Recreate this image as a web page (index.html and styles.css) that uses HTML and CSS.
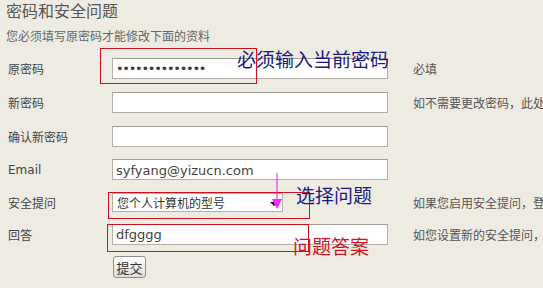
FILE: index.html
```html
<!DOCTYPE html>
<html lang="zh-CN">
<head>
    <meta charset="UTF-8">
    <title>密码和安全问题</title>
    <link rel="stylesheet" href="styles.css">
</head>
<body>
<div class="page">
    <h1 class="title">密码和安全问题</h1>
    <p class="intro">您必须填写原密码才能修改下面的资料</p>

    <form class="form">
        <div class="row r34">
            <label class="label">原密码</label>
            <input class="field pass" type="password" value="12345678901234">
            <span class="note">必填</span>
        </div>
        <div class="row r34">
            <label class="label">新密码</label>
            <input class="field pass" type="password">
            <span class="note">如不需要更改密码，此处</span>
        </div>
        <div class="row r34">
            <label class="label">确认新密码</label>
            <input class="field pass" type="password">
            <span class="note"></span>
        </div>
        <div class="row r33">
            <label class="label latin">Email</label>
            <input class="field latin" type="text" value="syfyang@yizucn.com">
            <span class="note"></span>
        </div>
        <div class="row r32">
            <label class="label">安全提问</label>
            <div class="select-col">
                <div class="select">
                    <span>您个人计算机的型号</span>
                    <span class="arrow"></span>
                </div>
            </div>
            <span class="note">如果您启用安全提问，登</span>
        </div>
        <div class="row r32">
            <label class="label">回答</label>
            <input class="field latin" type="text" value="dfgggg">
            <span class="note">如您设置新的安全提问，</span>
        </div>
        <div class="submit-row">
            <button class="button" type="button">提交</button>
        </div>
    </form>

    <!-- 截图上的标注 -->
    <div class="mark box1"></div>
    <div class="mark box2"></div>
    <div class="mark box3"></div>
    <span class="tip tip1">必须输入当前密码</span>
    <span class="tip tip2">选择问题</span>
    <span class="tip tip3">问题答案</span>
    <svg class="pointer" width="14" height="40" viewBox="0 0 14 40">
        <line x1="7" y1="0" x2="7" y2="28" stroke="#e01ee0" stroke-width="1"/>
        <polygon points="2,26 12,26 7,36" fill="#ff22ff"/>
    </svg>
</div>
</body>
</html>
```

FILE: styles.css
```css
html, body {
    margin: 0;
    padding: 0;
}
body {
    background-color: #eeebe3;
    font-family: "Noto Sans CJK SC", "DejaVu Sans", sans-serif;
    font-size: 12px;
    color: #4a4a4a;
    overflow: hidden;
}
.page {
    position: relative;
    width: 543px;
    height: 288px;
    overflow: hidden;
}
.title {
    margin: 0;
    padding: 0 0 0 6px;
    font-size: 16px;
    font-weight: normal;
    line-height: 20px;
    color: #555;
}
.intro {
    margin: 0;
    padding: 8px 0 0 6px;
    font-size: 12px;
    line-height: 16px;
    color: #666;
}
.form {
    margin-top: 7px;
}
.row {
    display: flex;
    align-items: center;
    white-space: nowrap;
}
.row > * {
    flex: none;
}
.r34 { height: 34px; }
.r33 { height: 33px; }
.r32 { height: 32px; }
.label {
    box-sizing: border-box;
    width: 112px;
    padding-left: 8px;
    color: #444;
}
.latin {
    font-family: "DejaVu Sans", sans-serif;
}
.field {
    box-sizing: border-box;
    width: 276px;
    height: 21px;
    margin: 0;
    padding: 1px 3px 0;
    border: 1px solid #b3afa6;
    border-top-color: #a09c94;
    background: #fff;
    font-size: 13px;
    color: #444;
    outline: none;
}
.pass {
    font-family: "DejaVu Sans", sans-serif;
    font-size: 13px;
    letter-spacing: -1.3px;
    color: #3c3c3c;
}
.select-col {
    width: 276px;
}
.select {
    box-sizing: border-box;
    width: 171px;
    height: 19px;
    display: flex;
    align-items: center;
    justify-content: space-between;
    padding: 0 4px 0 4px;
    border: 1px solid #b3afa6;
    background: #fff;
    color: #333;
}
.arrow {
    width: 0;
    height: 0;
    border-left: 4px solid transparent;
    border-right: 4px solid transparent;
    border-top: 4px solid #111;
    margin-top: 3px;
}
.note {
    width: 130px;
    margin-left: 25px;
    overflow: hidden;
    color: #555;
}
.submit-row {
    padding: 6px 0 0 113px;
}
.button {
    width: 33px;
    height: 22px;
    padding: 0;
    border: 1px solid #8e8e8e;
    border-radius: 3px;
    background: linear-gradient(#ffffff, #dcdcdc);
    font-family: "Noto Sans CJK SC", sans-serif;
    font-size: 13px;
    color: #333;
}
.mark {
    position: absolute;
    border: 1px solid #d0101e;
}
.box1 { left: 100px; top: 48px; width: 155px; height: 34px; }
.box2 { left: 108px; top: 192px; width: 200px; height: 25px; }
.box3 { left: 107px; top: 224px; width: 200px; height: 26px; }
.tip {
    position: absolute;
    font-size: 19px;
    line-height: 22px;
    white-space: nowrap;
}
.tip1 { left: 237px; top: 48px; color: #1a1a80; }
.tip2 { left: 296px; top: 184px; color: #1a1a80; }
.tip3 { left: 293px; top: 235px; color: #d01424; }
.pointer {
    position: absolute;
    left: 270px;
    top: 173px;
}
```
